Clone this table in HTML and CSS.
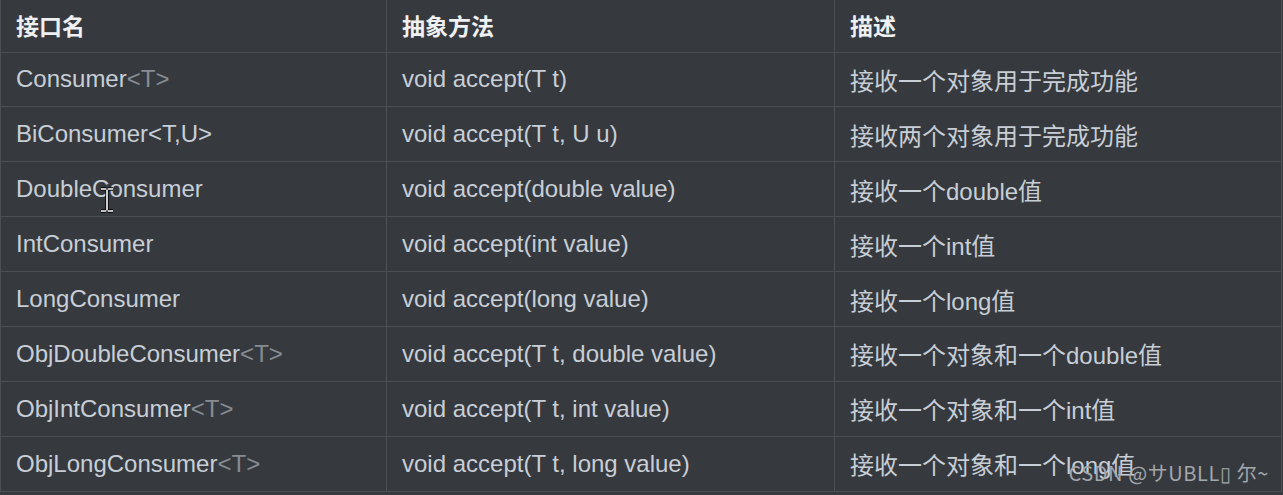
FILE: index.html
```html
<!DOCTYPE html>
<html lang="zh">
<head>
<meta charset="utf-8">
<title>Consumer 接口</title>
<link rel="stylesheet" href="styles.css">
</head>
<body>
<div class="page">
  <table class="api">
    <colgroup>
      <col class="c1"><col class="c2"><col class="c3">
    </colgroup>
    <thead>
      <tr><th>接口名</th><th>抽象方法</th><th>描述</th></tr>
    </thead>
    <tbody>
      <tr><td>Consumer<span class="gen">&lt;T&gt;</span></td><td>void accept(T t)</td><td>接收一个对象用于完成功能</td></tr>
      <tr><td>BiConsumer&lt;T,U&gt;</td><td>void accept(T t, U u)</td><td>接收两个对象用于完成功能</td></tr>
      <tr><td>DoubleConsumer</td><td>void accept(double value)</td><td>接收一个double值</td></tr>
      <tr><td>IntConsumer</td><td>void accept(int value)</td><td>接收一个int值</td></tr>
      <tr><td>LongConsumer</td><td>void accept(long value)</td><td>接收一个long值</td></tr>
      <tr><td>ObjDoubleConsumer<span class="gen">&lt;T&gt;</span></td><td>void accept(T t, double value)</td><td>接收一个对象和一个double值</td></tr>
      <tr><td>ObjIntConsumer<span class="gen">&lt;T&gt;</span></td><td>void accept(T t, int value)</td><td>接收一个对象和一个int值</td></tr>
      <tr><td>ObjLongConsumer<span class="gen">&lt;T&gt;</span></td><td>void accept(T t, long value)</td><td>接收一个对象和一个long值</td></tr>
    </tbody>
  </table>
  <div class="watermark">CSDN @サUBLL&#x25AF; 尔~</div>
  <svg class="cursor" width="16" height="26" viewBox="0 0 16 26" aria-hidden="true">
    <path d="M2 2h5M9 2h5M8 2.5v21M2 24h5M9 24h5" stroke="#000" stroke-width="3.4" fill="none"/>
    <path d="M2 2h5M9 2h5M8 2.5v21M2 24h5M9 24h5" stroke="#fff" stroke-width="1.6" fill="none"/>
  </svg>
</div>
</body>
</html>
```

FILE: styles.css
```css
html, body {
  margin: 0;
  padding: 0;
  background: #2f3338;
}
.page {
  position: relative;
  width: 1283px;
  height: 495px;
  background: #363a3f;
  overflow: hidden;
}
.api {
  border-collapse: collapse;
  width: 1281px;
  table-layout: fixed;
  font-family: "Liberation Sans", Arial, "Noto Sans CJK SC", sans-serif;
  font-size: 24px;
  color: #c8ced6;
}
.c1 { width: 386px; }
.c2 { width: 448px; }
.c3 { width: 447px; }
.api th, .api td {
  border: 1px solid #4b4f56;
  padding: 0 16px 0 15px;
  text-align: left;
  white-space: nowrap;
}
.api thead tr { height: 52px; }
.api thead th {
  border-top: none;
  font-weight: bold;
  color: #eef0f2;
  font-size: 23px;
  padding-bottom: 2px;
}
.api tbody tr { height: 54.9px; }
.gen { color: #878c93; }
.watermark {
  position: absolute;
  right: 14px;
  bottom: 8px;
  font-family: "Noto Sans CJK SC", "Liberation Sans", sans-serif;
  font-size: 20px;
  color: #a3a7ac;
  letter-spacing: 0.6px;
}
.cursor {
  position: absolute;
  left: 99px;
  top: 187px;
}
```
